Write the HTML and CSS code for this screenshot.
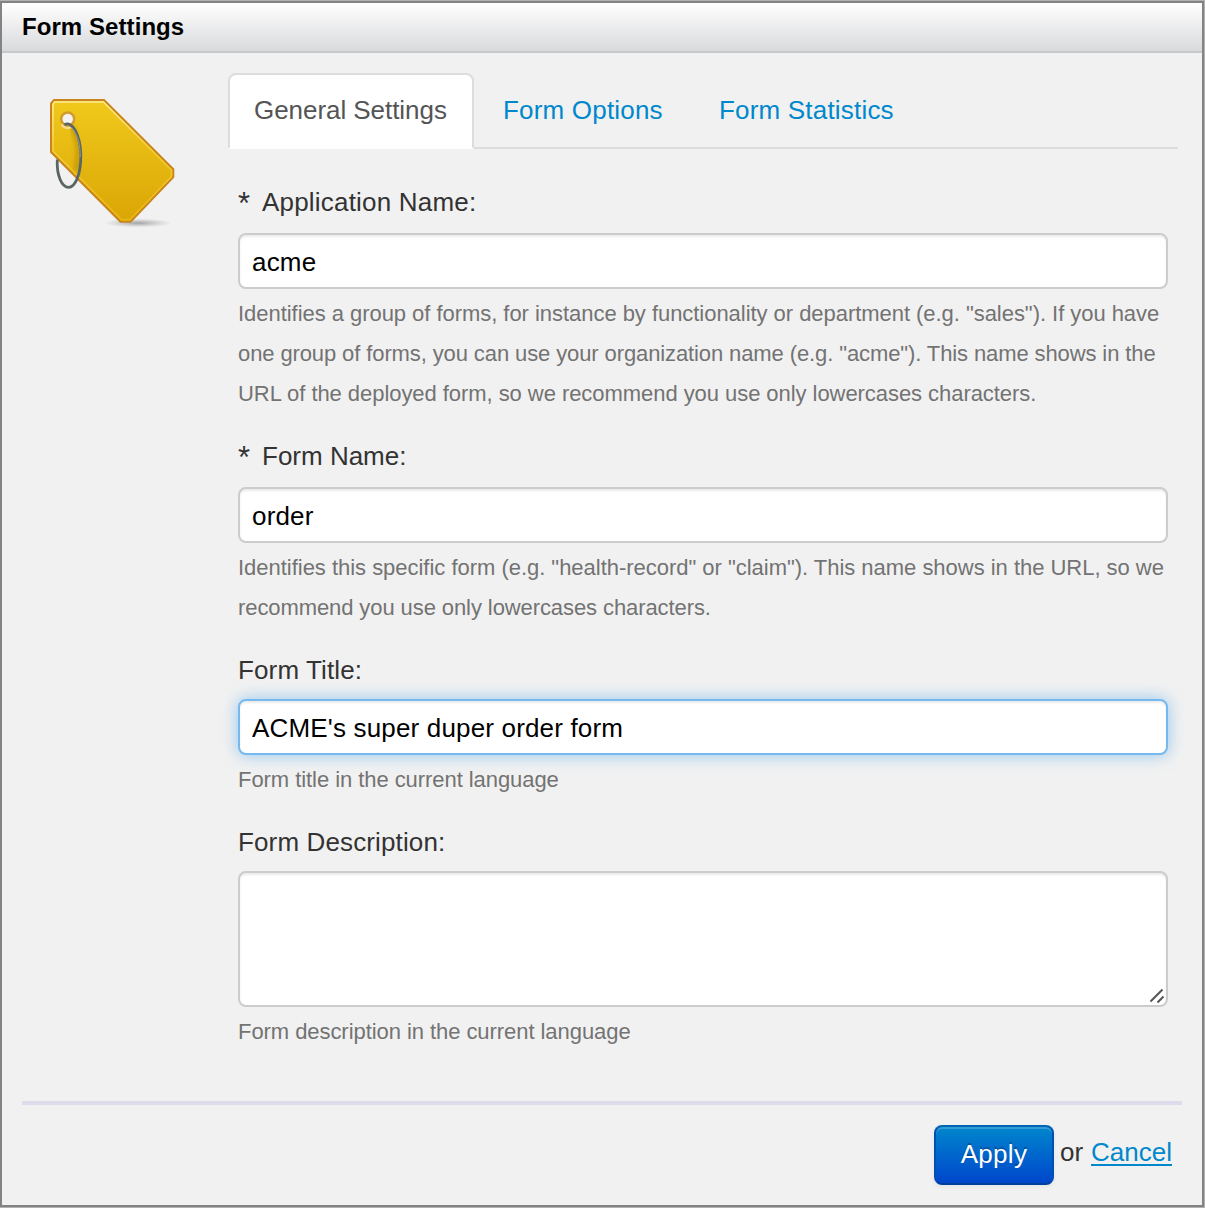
FILE: index.html
```html
<!DOCTYPE html>
<html lang="en">
<head>
<meta charset="utf-8">
<title>Form Settings</title>
<link rel="stylesheet" href="styles.css">
</head>
<body>
<main class="dialog">
  <header class="dialog-header"><h1 class="dialog-title">Form Settings</h1></header>
  <div class="dialog-body">
    <svg class="tag-icon" viewBox="0 0 130 134" width="130" height="134" aria-hidden="true">
      <defs>
        <linearGradient id="gold" x1="0" y1="0" x2="0" y2="1">
          <stop offset="0" stop-color="#f0c91c"/>
          <stop offset="1" stop-color="#daa605"/>
        </linearGradient>
        <linearGradient id="edge" x1="0" y1="0" x2="0" y2="1">
          <stop offset="0" stop-color="#ffeb94"/>
          <stop offset="0.45" stop-color="#f3cd38"/>
          <stop offset="1" stop-color="#e9b812"/>
        </linearGradient>
        <radialGradient id="shade">
          <stop offset="0" stop-color="#777" stop-opacity=".65"/>
          <stop offset="1" stop-color="#999" stop-opacity="0"/>
        </radialGradient>
        <filter id="soft"><feGaussianBlur stdDeviation="2"/></filter>
      </defs>
      <ellipse cx="92" cy="128" rx="34" ry="4.500" fill="url(#shade)"/>
      <path d="M8 5H58L127.300 74.300V82L84.500 126.700H74.500L5 57V8.500Z" fill="url(#gold)" stroke="#c9851b" stroke-width="2" stroke-linejoin="round"/>
      <path d="M8.500 7H57.500L125.500 75V81.500L84 124.700H75.500L7 56V9.500Z" fill="none" stroke="url(#edge)" stroke-width="1.500"/>
      <path d="M25 31Q36 50 30 76" fill="none" stroke="#a77a00" stroke-width="5" opacity=".5" filter="url(#soft)"/>
      <circle cx="21.700" cy="24" r="6.500" fill="#f3f3f3" stroke="#d39a2c" stroke-width="2.500"/>
      <path d="M15.500 29.500Q19 35 26 32" fill="none" stroke="#f3d99a" stroke-width="2"/>
      <path d="M18.500 29.800C26 25 34.500 40 34.800 60C35 80 29 92.300 22.700 92.300C15.500 92.300 10.500 80 11.300 64.500" fill="none" stroke="#5a6664" stroke-width="2.800"/>
      <path d="M26 33C32 40 34.300 50 34.300 62" fill="none" stroke="#98a29a" stroke-width=".8"/>
    </svg>
    <section class="content">
      <nav class="tabs">
        <a class="tab tab-active">General Settings</a>
        <a class="tab tab-options">Form Options</a>
        <a class="tab tab-stats">Form Statistics</a>
      </nav>
      <form class="fields">
        <div class="field">
          <label class="label label-app" for="app"><span class="required">*</span>Application Name:</label>
          <input class="control" id="app" value="acme">
          <p class="help"><span class="line help-1">Identifies a group of forms, for instance by functionality or department (e.g. "sales"). If you have</span><span class="line help-2">one group of forms, you can use your organization name (e.g. "acme"). This name shows in the</span><span class="line help-3">URL of the deployed form, so we recommend you use only lowercases characters.</span></p>
        </div>
        <div class="field">
          <label class="label" for="name"><span class="required">*</span>Form Name:</label>
          <input class="control" id="name" value="order">
          <p class="help"><span class="line help-4">Identifies this specific form (e.g. "health-record" or "claim"). This name shows in the URL, so we</span><span class="line help-5">recommend you use only lowercases characters.</span></p>
        </div>
        <div class="field">
          <label class="label label-plain" for="title">Form Title:</label>
          <input class="control control-focus" id="title" value="ACME's super duper order form">
          <p class="help"><span class="line">Form title in the current language</span></p>
        </div>
        <div class="field">
          <label class="label label-plain" for="desc">Form Description:</label>
          <div class="area-wrap">
            <textarea class="control area" id="desc"></textarea>
            <svg class="grip" width="16" height="16" viewBox="0 0 16 16" aria-hidden="true"><path d="M1.500 13.500L13.500 1.500M8.500 14.500L14.500 8.500" stroke="#555" stroke-width="2" fill="none"/></svg>
          </div>
          <p class="help"><span class="line">Form description in the current language</span></p>
        </div>
      </form>
    </section>
  </div>
  <footer class="dialog-footer">
    <button class="apply" type="button">Apply</button>
    <span class="or">or</span>
    <a class="cancel">Cancel</a>
  </footer>
</main>
</body>
</html>
```
FILE: styles.css
```css
* { box-sizing: border-box; }
body {
  margin: 0;
  padding: 1px 1px 1px 0;
  height: 1208px;
  background: #b2b2b2;
  font: 26px/40px "Liberation Sans", Arial, sans-serif;
  color: #333;
  overflow: hidden;
}
.dialog {
  height: 1206px;
  border: 2px solid #838383;
  background: #f1f1f1;
}
.dialog-header {
  height: 50px;
  padding: 0 20px;
  border-bottom: 2px solid #c8c9ca;
  background: linear-gradient(#fff, #d9dadc);
}
.dialog-title {
  margin: 0;
  font-size: 24px;
  line-height: 48px;
  letter-spacing: .07px;
  color: #000;
}
.dialog-body {
  display: flex;
  height: 1048px;
  padding: 20px 24px 0 44px;
}
.tag-icon { margin-top: 22px; flex: none; }
.content { width: 950px; margin-left: 52px; }
.tabs {
  display: flex;
  height: 76px;
  border-bottom: 2px solid #ddd;
}
.tab {
  height: 74px;
  padding: 2px 0 0;
  line-height: 70px;
  letter-spacing: .19px;
  color: #0088cc;
  white-space: nowrap;
}
.tab-active {
  width: 246px;
  height: 76px;
  padding: 0 0 0 24px;
  border: 2px solid #ddd;
  border-bottom-color: transparent;
  border-radius: 8px 8px 0 0;
  background: #fff;
  letter-spacing: -.05px;
  color: #555;
}
.tab-options { width: 216px; padding-left: 29px; }
.tab-stats { padding-left: 29px; }
.fields { padding: 33px 10px 0; }
.field { margin-bottom: 22px; }
.label { display: block; height: 51px; white-space: nowrap; }
.label-app { letter-spacing: .2px; }
.label-plain { height: 49px; letter-spacing: .13px; }
.required {
  display: inline-block;
  width: 24px;
  font-size: 31px;
  line-height: 30px;
  letter-spacing: 0;
  vertical-align: -3px;
}
.control {
  display: block;
  width: 930px;
  height: 56px;
  padding: 2px 12px 0;
  border: 2px solid #ccc;
  border-radius: 8px;
  background: #fff;
  box-shadow: inset 0 2px 2px rgba(0, 0, 0, .075);
  font: inherit;
  letter-spacing: .17px;
  color: #000;
  outline: none;
}
.control-focus {
  border-color: #75b9f0;
  box-shadow: inset 0 2px 2px rgba(0, 0, 0, .075), 0 0 16px rgba(82, 168, 236, .6);
}
.area-wrap { position: relative; }
.area { height: 136px; resize: none; }
.grip { position: absolute; right: 3px; bottom: 3px; }
.help {
  margin: 5px 0 0;
  font-size: 22px;
  letter-spacing: -.06px;
  color: #737373;
}
.line { display: block; white-space: nowrap; }
.help-1 { letter-spacing: -.042px; }
.help-2 { letter-spacing: -.108px; }
.help-3 { letter-spacing: -.055px; }
.help-4 { letter-spacing: -.024px; }
.help-5 { letter-spacing: -.09px; }
.dialog-footer {
  display: flex;
  align-items: flex-start;
  height: 90px;
  margin: 0 20px;
  padding: 20px 10px 0 0;
  justify-content: flex-end;
  border-top: 4px solid #dcdcec;
}
.apply {
  width: 120px;
  height: 60px;
  padding: 0 0 2px;
  border: 2px solid;
  border-color: #0064b5 #0050b4 #003e9c;
  border-radius: 8px;
  background: linear-gradient(#0088cc, #0044cc) border-box;
  box-shadow: inset 0 2px 0 rgba(255, 255, 255, .2), 0 2px 4px rgba(0, 0, 0, .05);
  font: inherit;
  letter-spacing: .3px;
  color: #fff;
  text-shadow: 0 -2px 0 rgba(0, 0, 0, .25);
}
.or { margin: 7px 8px 0 6px; }
.cancel {
  margin-top: 7px;
  color: #0088cc;
  text-decoration: underline;
  text-decoration-thickness: 2px;
  text-underline-offset: 3px;
}
```
